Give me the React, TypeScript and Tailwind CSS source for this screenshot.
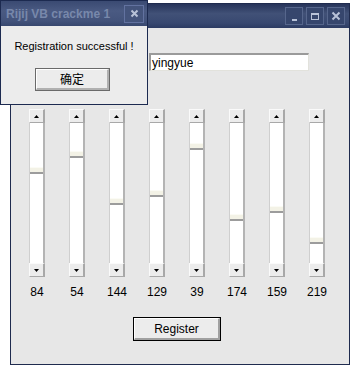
import React from "react";

const values = [84, 54, 144, 129, 39, 174, 159, 219];

function Arrow({ down }: { down?: boolean }) {
  return (
    <svg width="5" height="3" viewBox="0 0 5 3">
      {down ? <polygon points="0,0 5,0 2.5,3" fill="#000" /> : <polygon points="0,3 5,3 2.5,0" fill="#000" />}
    </svg>
  );
}

function ScrollBtn({ down }: { down?: boolean }) {
  return (
    <div className="h-[14px] w-[16px] bg-[#ececec] border-t border-l border-t-[#fafafa] border-l-[#fafafa] border-r-2 border-b border-r-[#a8a8a8] border-b-[#a8a8a8] flex items-center justify-center">
      <Arrow down={down} />
    </div>
  );
}

function VScroll({ value }: { value: number }) {
  const top = Math.round((value / 255) * (140 - 7));
  return (
    <div className="w-[16px] h-[168px] flex flex-col">
      <ScrollBtn />
      <div className="flex-1 relative bg-white border-l border-l-[#cfcfcf] border-r-2 border-r-[#b4b4b4]">
        <div
          className="absolute left-0 right-0 h-[7px] bg-[#f3f2e6] border-t border-t-[#fbfbf5] border-b-2 border-b-[#9c9c9c]"
          style={{ top }}
        />
      </div>
      <ScrollBtn down />
    </div>
  );
}

function TitleBtn({ children }: { children: React.ReactNode }) {
  return (
    <div className="w-[18px] h-[18px] border border-[#56668c] bg-[#36466d] flex items-center justify-center">
      {children}
    </div>
  );
}

export default function App() {
  return (
    <div
      className="w-[353px] h-[367px] bg-white relative overflow-hidden"
      style={{ fontFamily: '"Liberation Sans", Arial, sans-serif' }}
    >
      {/* main window */}
      <div className="ml-[10px] mt-[3px] w-[340px] h-[362px] border border-[#1f2b4e] flex flex-col bg-[#e7e7e7]">
        <div className="h-[24px] shrink-0 bg-[linear-gradient(to_bottom,#27345a,#415177_40%,#384870_80%,#2c3b62)] flex items-center justify-end gap-[3px] pr-[4px]">
          <TitleBtn>
            <div className="w-[5px] h-[2px] bg-[#b8c2d8] mt-[8px]" />
          </TitleBtn>
          <TitleBtn>
            <div className="w-[8px] h-[7px] border border-[#b8c2d8] border-t-2" />
          </TitleBtn>
          <TitleBtn>
            <svg width="10" height="10" viewBox="0 0 10 10">
              <path d="M1.5 1.5 L8.5 8.5 M8.5 1.5 L1.5 8.5" stroke="#b8c2d8" strokeWidth="2" />
            </svg>
          </TitleBtn>
        </div>
        <div className="flex flex-col">
          <div className="mt-[25px] ml-[138px] w-[160px] h-[18px] bg-white border-t-2 border-l-2 border-t-[#9a9a9a] border-l-[#9a9a9a] border-b border-r border-b-[#e2e2dc] border-r-[#e2e2dc] flex items-center pl-[1px] text-[12px] leading-[14px] text-black">
            yingyue
          </div>
          <div className="mt-[38px] ml-[18px] flex gap-[24px]">
            {values.map((v, i) => (
              <VScroll key={i} value={v} />
            ))}
          </div>
          <div className="mt-[8px] ml-[18px] flex gap-[24px]">
            {values.map((v, i) => (
              <div key={i} className="w-[16px] flex justify-center whitespace-nowrap text-[12px] leading-[14px] text-black">
                {v}
              </div>
            ))}
          </div>
          <div className="mt-[18px] ml-[122px] w-[88px] h-[24px] border border-black bg-[#ececec] flex">
            <div className="flex-1 border-t border-l border-t-white border-l-white border-r-2 border-b-2 border-r-[#a0a0a0] border-b-[#a0a0a0] flex items-center justify-center text-[12px] text-black">
              Register
            </div>
          </div>
        </div>
      </div>

      {/* message dialog */}
      <div className="absolute left-0 top-0 w-[148px] h-[105px] border border-[#1c2a50] bg-[#ececec] flex flex-col">
        <div className="h-[25px] shrink-0 bg-[linear-gradient(to_bottom,#3a4a72,#4a5a82_40%,#43537b_80%,#38486f)] flex items-center justify-between pl-[5px] pr-[3px]">
          <span className="text-[12px] font-bold text-[#7888ab] whitespace-nowrap">
            Rijij VB crackme 1
          </span>
          <div className="w-[20px] h-[18px] border border-[#6272a0] bg-[#44547c] flex items-center justify-center">
            <svg width="9" height="9" viewBox="0 0 9 9">
              <path d="M1.5 1.5 L7.5 7.5 M7.5 1.5 L1.5 7.5" stroke="#b8c2d8" strokeWidth="2" />
            </svg>
          </div>
        </div>
        <div className="mt-[13px] text-center text-[11px] leading-[14px] text-black whitespace-nowrap">
          Registration successful !
        </div>
        <div className="mt-[15px] ml-[34px] w-[75px] h-[23px] border border-[#6a6a6a] bg-[#ececec] flex">
          <div
            className="flex-1 border-t border-l border-t-white border-l-white border-r-2 border-b-2 border-r-[#b0b0b0] border-b-[#b0b0b0] flex items-center justify-center text-[12px] text-black"
            style={{ fontFamily: '"Noto Sans CJK SC", sans-serif' }}
          >
            确定
          </div>
        </div>
      </div>
    </div>
  );
}
